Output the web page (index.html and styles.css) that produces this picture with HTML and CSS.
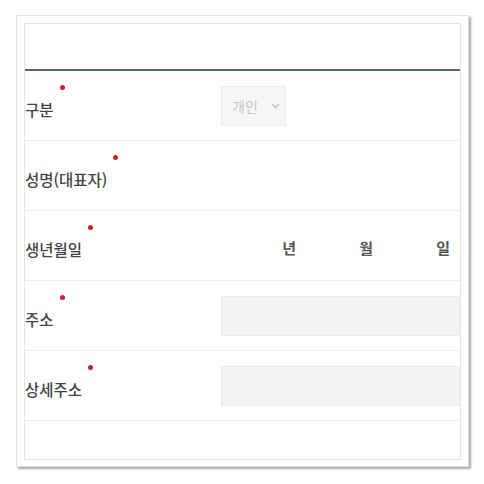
FILE: index.html
```html
<!DOCTYPE html>
<html lang="ko">
<head>
<meta charset="utf-8">
<link rel="stylesheet" href="styles.css">
</head>
<body>
<div class="frame">
  <div class="panel">
    <div class="head"></div>
    <div class="row">
      <div class="label"><span class="txt">구분<i class="req"></i></span></div>
      <div class="field">
        <div class="select"><span>개인</span>
          <svg width="9" height="6" viewBox="0 0 9 6"><path d="M1 1 L4.5 4.5 L8 1" fill="none" stroke="#c4c4c4" stroke-width="1.6"/></svg>
        </div>
      </div>
    </div>
    <div class="row">
      <div class="label"><span class="txt">성명(대표자)<i class="req"></i></span></div>
      <div class="field"></div>
    </div>
    <div class="row">
      <div class="label"><span class="txt">생년월일<i class="req"></i></span></div>
      <div class="field date">
        <span>년</span><span>월</span><span>일</span>
      </div>
    </div>
    <div class="row">
      <div class="label"><span class="txt">주소<i class="req"></i></span></div>
      <div class="field"><div class="input"></div></div>
    </div>
    <div class="row">
      <div class="label"><span class="txt">상세주소<i class="req"></i></span></div>
      <div class="field"><div class="input"></div></div>
    </div>
  </div>
</div>
</body>
</html>
```
FILE: styles.css
```css
html, body {
  margin: 0;
  padding: 0;
  background: #ffffff;
}
body {
  font-family: "Noto Sans CJK KR", "Noto Sans", sans-serif;
  width: 484px;
  height: 484px;
  overflow: hidden;
}
.frame {
  margin: 15px 0 0 16px;
  width: 437px;
  height: 436px;
  padding: 7px;
  border: 1px solid #e2e2e2;
  background: #fff;
  box-shadow: 2px 2px 2px rgba(0, 0, 0, 0.35);
}
.panel {
  width: 435px;
  height: 435px;
  border: 1px solid #e4e4e4;
  overflow: hidden;
  display: flex;
  flex-direction: column;
}
.head {
  height: 45px;
  flex: none;
  border-bottom: 2px solid #5b666f;
}
.row {
  height: 69px;
  flex: none;
  display: flex;
  align-items: center;
  border-bottom: 1px solid #ececec;
}
.label {
  width: 196px;
  flex: none;
  font-size: 15.5px;
  font-weight: 500;
  color: #444;
  padding-top: 6px;
  white-space: nowrap;
}
.txt {
  display: inline-block;
  position: relative;
  line-height: 20px;
}
.req {
  position: absolute;
  right: -11px;
  top: -14px;
  width: 5px;
  height: 5px;
  border-radius: 50%;
  background: #c8202c;
}
.field {
  flex: none;
  width: 300px;
}
.select {
  width: 65px;
  height: 40px;
  border: 1px solid #ececec;
  background: #f6f6f6;
  display: flex;
  align-items: center;
  gap: 13px;
  padding-left: 10px;
  box-sizing: border-box;
  font-size: 14px;
  color: #c6c6c6;
}
.date {
  display: grid;
  grid-template-columns: repeat(3, 77px);
  font-size: 15px;
  font-weight: 700;
  color: #555;
  padding-top: 4px;
}
.date span {
  text-align: right;
  padding-right: 2px;
}
.input {
  width: 300px;
  height: 40px;
  box-sizing: border-box;
  border: 1px solid #ebebeb;
  background: #f4f4f4;
}
```
